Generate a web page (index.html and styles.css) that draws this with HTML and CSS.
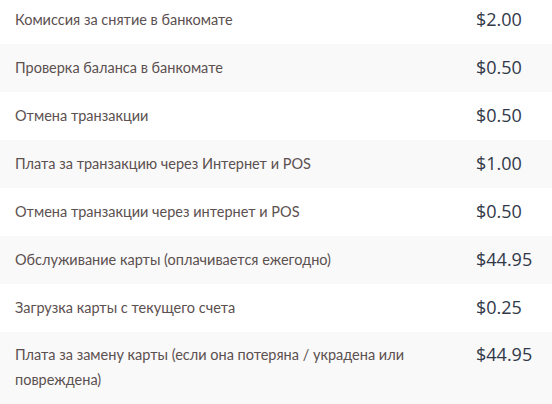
FILE: index.html
```html
<!DOCTYPE html>
<html lang="ru">
<head>
<meta charset="utf-8">
<link rel="stylesheet" href="styles.css">
</head>
<body>
<div class="fees">
  <div class="row"><div class="label">Комиссия за снятие в банкомате</div><div class="price">$2.00</div></div>
  <div class="row alt"><div class="label">Проверка баланса в банкомате</div><div class="price">$0.50</div></div>
  <div class="row"><div class="label">Отмена транзакции</div><div class="price">$0.50</div></div>
  <div class="row alt"><div class="label">Плата за транзакцию через Интернет и POS</div><div class="price">$1.00</div></div>
  <div class="row"><div class="label">Отмена транзакции через интернет и POS</div><div class="price">$0.50</div></div>
  <div class="row alt"><div class="label">Обслуживание карты (оплачивается ежегодно)</div><div class="price">$44.95</div></div>
  <div class="row"><div class="label">Загрузка карты с текущего счета</div><div class="price">$0.25</div></div>
  <div class="row alt last"><div class="label">Плата за замену карты (если она потеряна / украдена или повреждена)</div><div class="price">$44.95</div></div>
</div>
</body>
</html>
```
FILE: styles.css
```css
html, body {
  margin: 0;
  padding: 0;
  background: #ffffff;
}
.fees {
  margin-top: -4px;
}
.row {
  display: flex;
  align-items: flex-start;
  padding: 11px 0 12px 15px;
}
.row.alt {
  background: #f9f9f9;
}
.row.last {
  padding-top: 10px;
  padding-bottom: 30px;
}
.label {
  width: 420px;
  margin-right: 41px;
  font-family: "Lato", "Open Sans", sans-serif;
  font-size: 14.5px;
  line-height: 25px;
  color: #5c5050;
}
.price {
  font-family: "Open Sans", "Noto Sans", sans-serif;
  font-size: 18px;
  font-weight: 500;
  line-height: 25px;
  color: #313848;
}
```
